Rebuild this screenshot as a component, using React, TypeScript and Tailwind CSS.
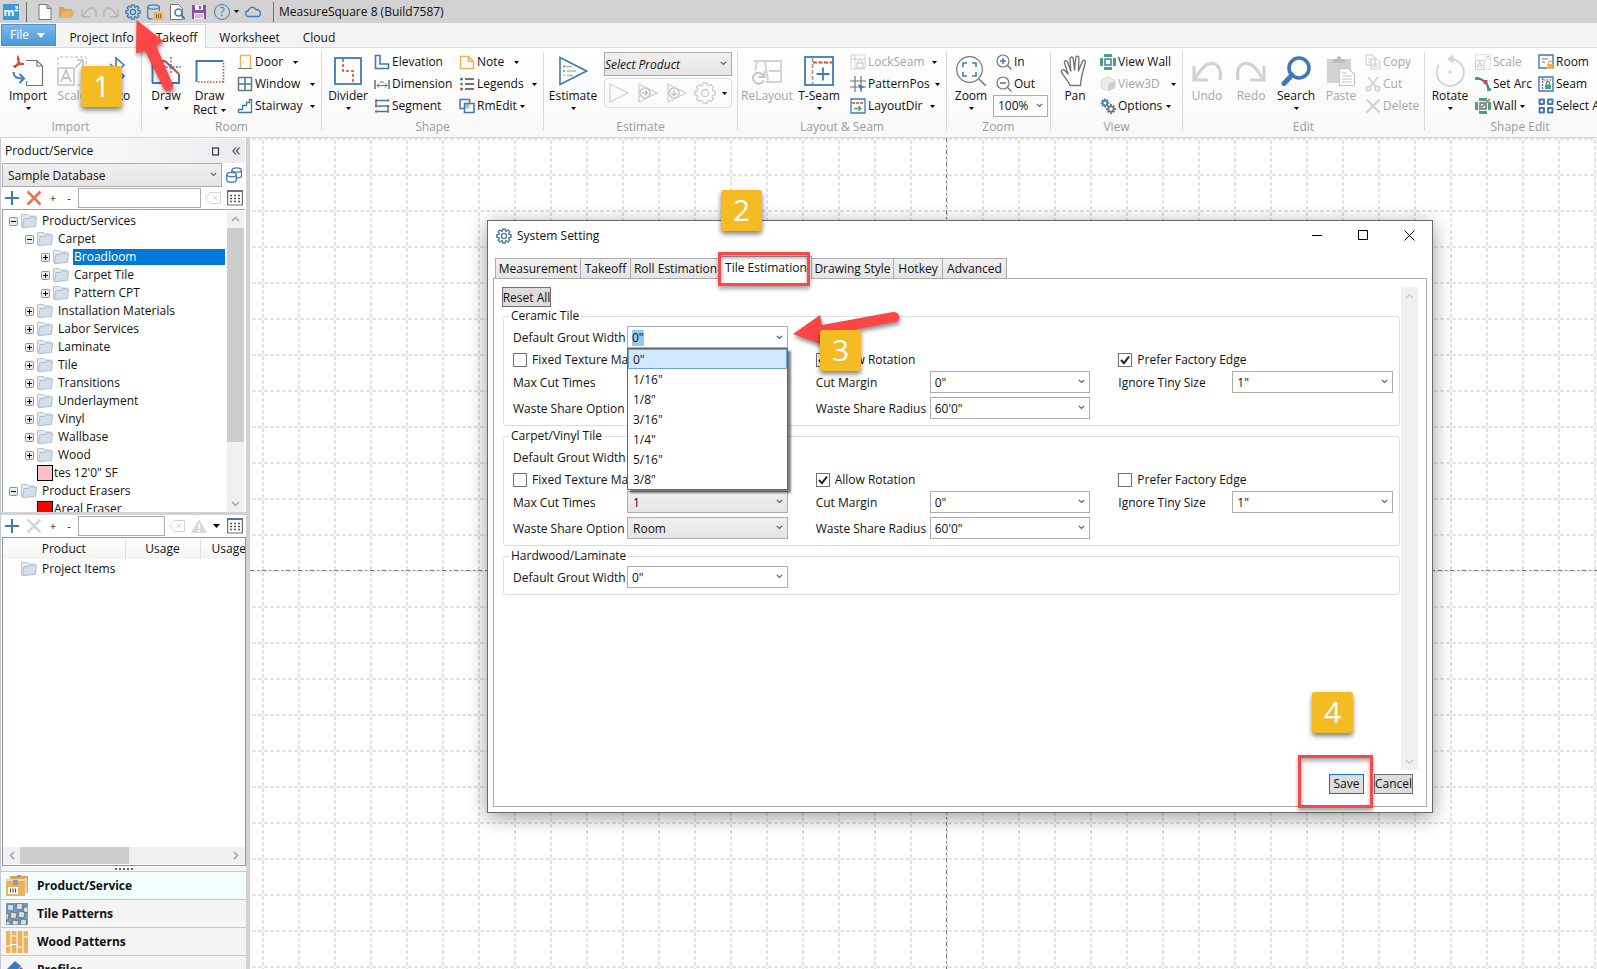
import React from "react";

type Kids = { children?: React.ReactNode };

const BLUE = "#3e7ab8";
const RED = "#cf4a33";
const ORANGE = "#e9b35f";
const GRAY = "#757575";
const GREEN = "#4ba37c";
const OFF = "#d2d2d2";

function Ico({ w = 16, h = 16, children }: Kids & { w?: number; h?: number }) {
  return (
    <svg width={w} height={h} viewBox={`0 0 ${w} ${h}`} fill="none" aria-hidden="true" className="shrink-0">
      {children}
    </svg>
  );
}

const gearPath = (cx: number, cy: number, r: number, depth: number) => {
  const pts: string[] = [];
  for (let i = 0; i < 8; i++) {
    const a = (i * Math.PI) / 4;
    const put = (ang: number, rad: number) => pts.push(`${(cx + Math.cos(ang) * rad).toFixed(2)} ${(cy + Math.sin(ang) * rad).toFixed(2)}`);
    put(a - 0.28, r - depth);
    put(a - 0.18, r);
    put(a + 0.18, r);
    put(a + 0.28, r - depth);
  }
  return `M${pts.join("L")}Z`;
};

function Gear({ size = 16, color = BLUE }: { size?: number; color?: string }) {
  const c = size / 2;
  return (
    <Ico w={size} h={size}>
      <path d={gearPath(c, c, c - 0.7, 2)} stroke={color} strokeWidth="1.3" strokeLinejoin="round" />
      <circle cx={c} cy={c} r={size * 0.16} stroke={color} strokeWidth="1.3" />
    </Ico>
  );
}

function Caret() {
  return (
    <svg width="5" height="3" viewBox="0 0 5 3" aria-hidden="true" className="shrink-0">
      <path d="M0 0h5L2.500 3z" fill="#000" />
    </svg>
  );
}

function Chevron() {
  return (
    <svg width="7" height="5" viewBox="0 0 7 5" fill="none" aria-hidden="true" className="shrink-0">
      <path d="M.8.8l2.700 2.700L6.200.8" stroke="#606060" strokeWidth="1.200" />
    </svg>
  );
}

/* ---------- ribbon ---------- */

function Group({ label, width, children, last }: Kids & { label: string; width: string; last?: boolean }) {
  return (
    <section aria-label={label} className={`flex shrink-0 flex-col pt-[3px] ${width}`}>
      <div className={`relative flex h-[79px] flex-col ${last ? "" : "border-r border-[#d9d9d9]"}`}>
        <div className="flex h-[66px] items-start">{children}</div>
        <div className="text-center leading-5 text-[#9b9b9b]">{label}</div>
      </div>
    </section>
  );
}

function Big({ icon, label, width, caret, dim, children }: Kids & { icon: React.ReactNode; label: string; width: string; caret?: boolean; dim?: boolean }) {
  return (
    <button type="button" className={`flex h-[66px] shrink-0 flex-col items-center whitespace-nowrap pt-1 leading-[14px] ${width} ${dim ? "text-[#a6a6a6]" : ""}`}>
      <span className="flex h-8 items-center">{icon}</span>
      <span className="mt-0.5">{label}</span>
      {children}
      {caret && (
        <span className="mt-1">
          <Caret />
        </span>
      )}
    </button>
  );
}

function Small({ icon, label, width = "", caret, dim }: { icon: React.ReactNode; label: string; width?: string; caret?: boolean; dim?: boolean }) {
  return (
    <button type="button" className={`flex h-[22px] items-center whitespace-nowrap ${width} ${dim ? "text-[#a6a6a6]" : ""}`}>
      <span className="mr-0.5 flex">{icon}</span>
      <span>{label}</span>
      {caret && (
        <span className="ml-auto">
          <Caret />
        </span>
      )}
    </button>
  );
}

const ScaleArt = ({ k = 1 }: { k?: number }) => (
  <svg width={30 * k} height={30 * k} viewBox="0 0 30 30" fill="none" aria-hidden="true">
    <path d="M1 9V1h28v28H19" stroke="#cfcfcf" strokeWidth="1.600" strokeDasharray="3 2" />
    <path d="M1 12h16v17H1zM18 12l8-8m-6 0h6v6" stroke="#c4c4c4" strokeWidth="1.600" />
    <path d="M4 26l5-12 5 12M6 22h6" stroke="#c4c4c4" strokeWidth="1.800" />
  </svg>
);

const UndoArt = ({ flip, s = 30, color = OFF, sw = 3.2 }: { flip?: boolean; s?: number; color?: string; sw?: number }) => (
  <svg width={s} height={s} viewBox="0 0 30 30" fill="none" aria-hidden="true">
    <g transform={flip ? "matrix(-1 0 0 1 30 0)" : undefined}>
      <path d="M2 10v14h14" stroke={color} strokeWidth={sw} />
      <path d="M3 23C9 13 14 6.500 21 7.500c6 1 8.500 7 7 16.500" stroke={color} strokeWidth={sw} />
    </g>
  </svg>
);

const DashRect = () => (
  <Ico w={30} h={30}>
    <path d="M1.500 26V5h27" stroke={BLUE} strokeWidth="2" />
    <path d="M28.500 7v19M3 26h26" stroke={RED} strokeWidth="1.600" strokeDasharray="1.500 1.500" />
  </Ico>
);

const LoopDisc = ({ down }: { down?: boolean }) => (
  <Ico w={22} h={22}>
    <path d="M2 2l18 9-18 9z" stroke="#d0d0d0" strokeWidth="1.200" />
    <circle cx="8" cy="11" r="5" stroke="#c8c8c8" strokeWidth="1.600" fill="#fafafa" />
    <path d={down ? "M8 8v5m-2.500-2l2.500 2.500 2.500-2.500" : "M5 11h5m-2-2.500l2.500 2.500-2.500 2.500"} stroke="#c0c0c0" strokeWidth="1.300" />
  </Ico>
);

const Mag = ({ sign }: { sign: string }) => (
  <Ico>
    <circle cx="7" cy="7" r="6" stroke={GRAY} strokeWidth="1.200" />
    <path d="M11.500 11.500l4 4" stroke={GRAY} strokeWidth="1.300" />
    <path d={sign} stroke={BLUE} strokeWidth="1.500" />
  </Ico>
);

const WallArt = ({ cut }: { cut?: boolean }) => (
  <Ico>
    <path d="M4 0h8v3H4zM4 13h8v3H4zM0 4h3v8H0zM13 4h3v8h-3z" fill={GREEN} />
    <rect x="5" y="5" width="6" height="6" stroke={BLUE} strokeWidth="1.500" />
    {cut && <path d="M4 12L15 1" stroke="#e07a52" strokeWidth="2" />}
  </Ico>
);

function Ribbon() {
  return (
    <div className="flex h-[90px] shrink-0 overflow-hidden border-b border-[#d5d5d5] bg-linear-to-b from-white to-[#f8f8f8]">
      <Group label="Import" width="w-[142px]">
        <Big width="ml-2 w-10" label="Import" caret icon={
          <Ico w={32} h={32}>
            <path d="M14 5.500h11l5.500 5.500v19.500h-16V26M25 5.500V11h5.500" stroke={GRAY} strokeWidth="1.200" />
            <path d="M1 11.500c5-1 7-5 5-9.500-1 4 2 8 6 7-4 0-8 1-9 4" stroke={RED} strokeWidth="1.700" />
            <path d="M1.500 17c0 5 3 6.500 9 6.500" stroke={BLUE} strokeWidth="2" />
            <path d="M7.500 19l4.500 4.500L7.500 28" stroke={BLUE} strokeWidth="2" />
          </Ico>
        } />
        <Big width="w-12" label="Scale" dim icon={<ScaleArt />} />
        <Big width="w-[42px]" label="Auto" icon={
          <Ico w={30} h={32}>
            <path d="M8 9l14 12-8 8V3l8 7L8 23" stroke={BLUE} strokeWidth="1.600" />
          </Ico>
        } />
      </Group>

      <Group label="Room" width="w-[180px]">
        <Big width="ml-1 w-10" label="Draw" caret icon={
          <Ico w={30} h={30}>
            <path d="M1.500 27V5H14M28 18v9H1" stroke={BLUE} strokeWidth="2" />
            <path d="M14 5l14 13" stroke={RED} strokeWidth="2" />
            <path d="M20 1v16M11 11h19" stroke={BLUE} strokeWidth="1.400" strokeDasharray="2 1.500" />
          </Ico>
        } />
        <button type="button" className="ml-1 flex h-[66px] w-[39px] shrink-0 flex-col items-center pt-1 leading-[14px]">
          <span className="flex h-8 items-center"><DashRect /></span>
          <span className="mt-0.5">Draw</span>
          <span className="flex items-center gap-1">Rect <Caret /></span>
        </button>
        <div className="ml-2 flex flex-col">
          <Small label="Door" width="w-[61px]" caret icon={
            <Ico>
              <path d="M3.500 14V1.500h10V14" stroke={ORANGE} strokeWidth="1.500" />
              <path d="M1 14.500h14" stroke={GRAY} />
              <circle cx="6" cy="8" r="0.800" fill={ORANGE} />
            </Ico>
          } />
          <Small label="Window" width="w-[78px]" caret icon={
            <Ico>
              <rect x="1.500" y="1.500" width="13" height="13" stroke={GRAY} strokeWidth="1.500" />
              <path d="M8 2v12M2 8h12" stroke={BLUE} strokeWidth="1.500" />
            </Ico>
          } />
          <Small label="Stairway" width="w-[78px]" caret icon={
            <Ico><path d="M1.500 14.500v-3h4v-4h4v-3h3v-3h2v13z" stroke={BLUE} strokeWidth="1.300" /></Ico>
          } />
        </div>
      </Group>

      <Group label="Shape" width="w-[222px]">
        <Big width="ml-1 w-11" label="Divider" caret icon={
          <Ico w={28} h={28}>
            <rect x="1" y="1" width="26" height="26" stroke={BLUE} strokeWidth="1.800" />
            <path d="M9 2v12h10v13" stroke={RED} strokeWidth="1.600" strokeDasharray="3 2" />
          </Ico>
        } />
        <div className="ml-1 flex w-[85px] flex-col">
          <Small label="Elevation" icon={<Ico><path d="M1.500 1.500h4.500v8.500h8.500v4.500h-13z" stroke={BLUE} strokeWidth="1.600" /></Ico>} />
          <Small label="Dimension" icon={
            <Ico>
              <path d="M1 4v9M15 4v9" stroke={GRAY} strokeWidth="1.600" />
              <path d="M3 9.500h10M5 7.500l-2 2 2 2M11 7.500l2 2-2 2" stroke={BLUE} />
              <path d="M6 6h4" stroke={GRAY} />
            </Ico>
          } />
          <Small label="Segment" icon={
            <Ico>
              <path d="M2 2.500h12M2 8h12M2 13.500h12M2 3v5M14 8v5" stroke={BLUE} strokeWidth="1.400" />
              <path d="M1 1.500h2v2H1zM13 1.500h2v2h-2zM1 7h2v2H1zM13 7h2v2h-2zM1 12.500h2v2H1zM13 12.500h2v2h-2z" fill={RED} />
            </Ico>
          } />
        </div>
        <div className="flex flex-col">
          <Small label="Note" width="w-[60px]" caret icon={<Ico><path d="M1.500 2.500h8l5 5v7h-13zM9.500 2.500v5h5" stroke={ORANGE} strokeWidth="1.500" /></Ico>} />
          <Small label="Legends" width="w-[78px]" caret icon={
            <Ico>
              <path d="M6 3h9M6 8h9M6 13h9" stroke={GRAY} strokeWidth="2" />
              <circle cx="2.500" cy="3" r="1.500" fill={BLUE} /><circle cx="2.500" cy="8" r="1.500" fill={GREEN} /><circle cx="2.500" cy="13" r="1.500" fill={RED} />
            </Ico>
          } />
          <Small label="RmEdit" width="w-[66px]" caret icon={
            <Ico>
              <path d="M5.500 5.500h5v5h-5z" fill="#bcbcbc" />
              <path d="M5 10.500H1v-9h9.500V5M5.500 5.500h9.500v9H5.500z" stroke={BLUE} strokeWidth="1.500" />
            </Ico>
          } />
        </div>
      </Group>

      <Group label="Estimate" width="w-[194px]">
        <Big width="ml-1 w-[50px]" label="Estimate" caret icon={
          <Ico w={30} h={30}>
            <path d="M2 1.500L28.500 15 2 28.500z" stroke={BLUE} strokeWidth="1.600" />
            <path d="M8 10.500h6M9 15h9M9 19.500h6" stroke="#b5b5b5" strokeWidth="1.600" />
            <circle cx="6" cy="10.500" r="1" fill={RED} /><circle cx="6" cy="15" r="1" fill={GREEN} /><circle cx="6" cy="19.500" r="1" fill={ORANGE} />
          </Ico>
        } />
        <div className="ml-1.5 mt-px flex w-32 flex-col gap-0.5">
          <div className="relative">
            <select aria-label="Select Product" className="block h-6 w-full appearance-none border border-[#acacac] bg-linear-to-b from-[#f0f0f0] to-[#e5e5e5] pt-0.5 text-left italic">
              <option>Select Product</option>
            </select>
            <span className="pointer-events-none absolute right-[5px] top-[9px]"><Chevron /></span>
          </div>
          <div className="flex h-[30px] items-center justify-between rounded-sm border border-[#dcdcdc] px-1">
            <button type="button" aria-label="Run"><Ico w={22} h={22}><path d="M1 2l18 9-18 9z" stroke="#d0d0d0" strokeWidth="1.200" /></Ico></button>
            <button type="button" aria-label="Run next"><LoopDisc /></button>
            <button type="button" aria-label="Run down"><LoopDisc down /></button>
            <button type="button" aria-label="Estimate settings"><Gear size={22} color="#cccccc" /></button>
            <Caret />
          </div>
        </div>
      </Group>

      <Group label="Layout & Seam" width="w-[209px]">
        <Big width="ml-1 w-[50px]" label="ReLayout" dim icon={
          <Ico w={32} h={30}>
            <path d="M3 5h28M6 5L4 15M14 5l3 21M18 15h13M15 26h16M30 5v21" stroke={OFF} strokeWidth="1.800" />
            <path d="M12.500 20a5.500 5.500 0 1 0 0 4.500" stroke="#c6c6c6" strokeWidth="2" />
            <path d="M13.500 15v6h-6" stroke="#c6c6c6" strokeWidth="1.800" />
          </Ico>
        } />
        <Big width="ml-1 w-[46px]" label="T-Seam" caret icon={
          <Ico w={30} h={30}>
            <rect x="1" y="1" width="28" height="28" stroke={BLUE} strokeWidth="1.800" />
            <path d="M8.500 2v26" stroke="#9a9a9a" strokeWidth="1.600" strokeDasharray="4 2" />
            <path d="M9 6.500h19" stroke={RED} strokeWidth="1.800" strokeDasharray="4 1.500" />
            <path d="M19 11.500v13M12.500 18h13" stroke={BLUE} strokeWidth="1.800" />
          </Ico>
        } />
        <div className="ml-2 flex flex-col">
          <Small label="LockSeam" width="w-[87px]" caret dim icon={
            <Ico>
              <path d="M1 1h14v14H1zM1 5h14M5 1v14" stroke={OFF} />
              <path d="M7 9h6v5H7zM8 9V7.500a2 2 0 0 1 4 0V9" stroke={OFF} strokeWidth="1.300" />
            </Ico>
          } />
          <Small label="PatternPos" width="w-[90px]" caret icon={
            <Ico>
              <path d="M5 0v16M11 0v16M0 5h16M0 11h16" stroke={GRAY} strokeWidth="1.200" />
              <path d="M8 8l7 3-3 1-1 3z" fill={BLUE} />
            </Ico>
          } />
          <Small label="LayoutDir" width="w-[85px]" caret icon={
            <Ico>
              <path d="M1 1h14v14H1z" stroke={BLUE} strokeWidth="1.300" />
              <path d="M2 5h12" stroke={RED} strokeWidth="1.500" strokeDasharray="3 1" />
              <path d="M4 10.500h7M8.500 8l2.500 2.500L8.500 13" stroke={GREEN} strokeWidth="1.300" />
            </Ico>
          } />
        </div>
      </Group>

      <Group label="Zoom" width="w-[104px]">
        <Big width="ml-1 w-10" label="Zoom" caret icon={
          <Ico w={30} h={30}>
            <circle cx="13.500" cy="13.500" r="12.800" stroke={GRAY} strokeWidth="1.200" />
            <path d="M23 23l7 7" stroke={GRAY} strokeWidth="1.500" />
            <path d="M7 11V7h4M16 7h4v4M20 16v4h-4M11 20H7v-4" stroke={BLUE} strokeWidth="1.600" />
          </Ico>
        } />
        <div className="ml-0.5 flex flex-col">
          <div className="ml-[3px]">
            <Small label="In" icon={<Mag sign="M7 4v6M4 7h6" />} />
            <Small label="Out" icon={<Mag sign="M4 7h6" />} />
          </div>
          <div className="relative">
            <select aria-label="Zoom level" className="block h-[22px] w-[55px] appearance-none border border-[#acacac] bg-white pl-1">
              <option>100%</option>
            </select>
            <span className="pointer-events-none absolute right-[5px] top-2"><Chevron /></span>
          </div>
        </div>
      </Group>

      <Group label="View" width="w-[132px]">
        <Big width="ml-1 w-10" label="Pan" icon={
          <Ico w={30} h={32}>
            <path d="M10 30.500C9 26 3 21 1.500 17c-.8-2.200 1.700-3.200 3.200-1.400L8 19 4.500 8c-.7-2.500 2.300-3.200 3.100-1l3.200 9L10 4c-.1-2.500 3-2.600 3.300-.2L14.500 15l1.200-12c.3-2.500 3.300-2.200 3.200.2L18.500 16l3.800-9.500c.9-2.200 3.600-1.200 3 1L22 20c-.8 4-1.500 7-1.500 10.500z" stroke={GRAY} strokeWidth="1.400" strokeLinejoin="round" />
          </Ico>
        } />
        <div className="ml-[5px] flex flex-col">
          <Small label="View Wall" icon={<WallArt />} />
          <Small label="View3D" width="w-[76px]" caret dim icon={
            <Ico>
              <path d="M8 1l7 3.500v7L8 15l-7-3.500v-7z" fill="#ececec" stroke="#d8d8d8" />
              <path d="M8 8l7-3.500v7L8 15z" fill="#cfcfcf" />
            </Ico>
          } />
          <Small label="Options" width="w-[71px]" caret icon={
            <Ico>
              <path d={gearPath(5, 5, 4.6, 1.5)} fill={BLUE} /><circle cx="5" cy="5" r="1.500" fill="#fff" />
              <path d={gearPath(11, 11, 5, 1.5)} fill={GRAY} /><circle cx="11" cy="11" r="1.800" fill="#fff" />
            </Ico>
          } />
        </div>
      </Group>

      <Group label="Edit" width="w-[242px]">
        <Big width="ml-1 w-10" label="Undo" dim icon={<UndoArt />} />
        <Big width="ml-1 w-10" label="Redo" dim icon={<UndoArt flip />} />
        <Big width="ml-1 w-[42px]" label="Search" caret icon={
          <Ico w={30} h={30}>
            <circle cx="18" cy="12" r="10" stroke={BLUE} strokeWidth="3.600" />
            <path d="M11 19l-8 8.500" stroke={BLUE} strokeWidth="5" strokeLinecap="round" />
          </Ico>
        } />
        <Big width="ml-1 w-10" label="Paste" dim icon={
          <Ico w={30} h={30}>
            <path d="M1 3h24v24H1z" fill="#d2d2d2" />
            <path d="M7 3h4c0-4 4-4 4 0h4v4H7z" fill="#bdbdbd" />
            <path d="M13.500 12.500h9l6 6v11h-15z" fill="#fff" stroke="#c4c4c4" strokeWidth="1.200" />
            <path d="M16 17h5M16 20h10M16 23h10M16 26h10" stroke="#c4c4c4" />
          </Ico>
        } />
        <div className="ml-1 flex flex-col">
          <Small label="Copy" dim icon={
            <Ico>
              <path d="M1 1h6l3 3v7H1zM6 5h5.500L15 8v7H6z" fill="#fff" stroke={OFF} strokeWidth="1.200" />
              <path d="M3 5h3M3 8h3M8 10h5M8 12.500h5" stroke={OFF} />
            </Ico>
          } />
          <Small label="Cut" dim icon={
            <Ico>
              <path d="M3 1l8 10M13 1L5 11" stroke={OFF} strokeWidth="2" />
              <circle cx="3.500" cy="12.500" r="2.200" stroke={OFF} strokeWidth="1.800" /><circle cx="12.500" cy="12.500" r="2.200" stroke={OFF} strokeWidth="1.800" />
            </Ico>
          } />
          <Small label="Delete" dim icon={<Ico><path d="M1.500 1.500l13 13M14.500 1.500l-13 13" stroke={OFF} strokeWidth="2.400" /></Ico>} />
        </div>
      </Group>

      <Group label="Shape Edit" width="w-[190px]" last>
        <Big width="ml-1 w-[42px]" label="Rotate" caret icon={
          <Ico w={32} h={32}>
            <path d="M5 10a13.500 13.500 0 1 0 11-6" stroke={OFF} strokeWidth="1.800" />
            <path d="M19 0l-5 4 5 4z" fill={OFF} stroke={OFF} />
            <circle cx="16" cy="17" r="1.600" fill={OFF} />
          </Ico>
        } />
        <div className="ml-1 flex w-[63px] flex-col">
          <Small label="Scale" dim icon={<ScaleArt k={16 / 30} />} />
          <Small label="Set Arc" icon={
            <Ico>
              <path d="M1 2c7 1 12 5 13 13" stroke={BLUE} strokeWidth="2.200" />
              <path d="M0 1h4v3H0zM12 12h4v3h-4z" fill={GREEN} /><path d="M8.500 4h4v4h-4z" fill={RED} />
            </Ico>
          } />
          <Small label="Wall" width="w-[50px]" caret icon={<WallArt cut />} />
        </div>
        <div className="flex flex-col">
          <Small label="Room" icon={
            <Ico>
              <path d="M1 1h14v13H1z" stroke={BLUE} strokeWidth="1.400" /><path d="M4 5h6M4 8h3" stroke={GRAY} />
              <path d="M9 10h6v5H9z" fill={ORANGE} /><path d="M10.500 10V8.500a1.500 1.500 0 0 1 3 0" stroke={ORANGE} strokeWidth="1.300" />
            </Ico>
          } />
          <Small label="Seam" icon={
            <Ico>
              <path d="M1 1h14v14H1z" stroke={BLUE} strokeWidth="1.400" /><path d="M4.500 2v12M5 4h9" stroke="#8a4fa0" strokeWidth="1.200" strokeDasharray="2 1" />
              <path d="M7 8.500h6V13H7z" fill={GREEN} /><path d="M8.500 8.500V7a1.500 1.500 0 0 1 3 0v1.500" stroke={GREEN} strokeWidth="1.300" />
            </Ico>
          } />
          <Small label="Select All" icon={<Ico><path d="M1.500 1.500H6V6H1.500zM10 1.500h4.500V6H10zM1.500 10H6v4.500H1.500zM10 10h4.500v4.500H10z" stroke={BLUE} strokeWidth="1.900" strokeLinejoin="round" /></Ico>} />
        </div>
      </Group>
    </div>
  );
}

/* ---------- title bar and tabs ---------- */

function TitleBar() {
  return (
    <header className="flex h-[23px] shrink-0 items-center bg-[#d2d2d2]">
      <span className="ml-[3px] flex h-4 w-4 items-center justify-center bg-[#3d9ad6] text-[11px] font-bold leading-4 text-white">m²</span>
      <span className="ml-[7px] h-5 w-px bg-[#6e6e6e]" />
      <div className="ml-2.5 flex items-center gap-1.5">
        <button type="button" aria-label="New"><Ico><path d="M2 .5h8l4 4v11H2zM10 .5v4h4" fill="#fff" stroke="#777" /></Ico></button>
        <button type="button" aria-label="Open"><Ico><path d="M0 3h5l1 2h7v2H4l-3 7H0z" fill="#dfa04a" /><path d="M4 7h12l-3 7H1z" fill={ORANGE} /></Ico></button>
        <button type="button" aria-label="Undo"><UndoArt s={16} color="#b4b4b4" sw={2.6} /></button>
        <button type="button" aria-label="Redo"><UndoArt s={16} flip color="#b4b4b4" sw={2.6} /></button>
        <button type="button" aria-label="Settings"><Gear /></button>
        <button type="button" aria-label="Database">
          <Ico>
            <ellipse cx="6.500" cy="3" rx="5.800" ry="2.200" stroke={BLUE} strokeWidth="1.200" />
            <path d="M.7 3v10c0 1 2 2 5 2M12.300 3v4" stroke={BLUE} strokeWidth="1.200" />
            <path d="M7 8h9v8H7z" fill={ORANGE} /><path d="M9.500 10v4M11.500 10v4M13.500 10v4" stroke="#8a6a35" />
          </Ico>
        </button>
        <button type="button" aria-label="Preview">
          <Ico>
            <path d="M1.500 .5h8l4 4v11h-12z" fill="#fff" stroke="#777" />
            <circle cx="9.500" cy="8.500" r="3.500" stroke={BLUE} strokeWidth="1.600" fill="#fff" /><path d="M12 11l4 4" stroke={BLUE} strokeWidth="2" />
          </Ico>
        </button>
        <button type="button" aria-label="Save project">
          <Ico><path d="M1 1h14v14H1z" fill="#8a4fa0" /><path d="M4 1h8v5H4zM3 9h10v6H3z" fill="#f4eef6" /><path d="M8 2h2v3H8z" fill="#8a4fa0" /><path d="M4 11h8M4 13h8" stroke="#a98bb5" /></Ico>
        </button>
        <button type="button" aria-label="Help" className="ml-px flex items-center gap-1">
          <span className="flex h-4 w-4 items-center justify-center rounded-full border border-[#3e7ab8] text-[12px] leading-4 text-[#3e7ab8]">?</span>
          <Caret />
        </button>
        <button type="button" aria-label="Cloud sync"><Ico><path d="M4 12.500a3 3 0 0 1-.5-6C4 3 9 2 11 5.500c3 0 4.500 2 4.500 3.700 0 2-1.500 3.300-3 3.300z" stroke={BLUE} strokeWidth="1.300" /></Ico></button>
      </div>
      <span className="ml-3 h-5 w-px bg-[#6e6e6e]" />
      <h1 className="ml-[5px]">MeasureSquare 8 (Build7587)</h1>
    </header>
  );
}

function TabStrip() {
  return (
    <nav className="flex h-[25px] shrink-0 items-end border-b border-[#dadada] bg-[#f4f4f4]">
      <button type="button" className="mb-px ml-px flex h-[22px] w-[55px] items-center gap-2 border border-[#4a93d2] bg-linear-to-b from-[#7db8e6] to-[#4a99da] pl-2 text-white">
        File
        <svg width="8" height="5" viewBox="0 0 8 5" aria-hidden="true"><path d="M0 0h8L4 5z" fill="#fff" /></svg>
      </button>
      <button type="button" className="h-[22px] w-[91px] pt-[3px]">Project Info</button>
      <button type="button" className="-mb-px h-6 w-[59px] border border-b-0 border-[#dadada] bg-white pt-[3px]">Takeoff</button>
      <button type="button" className="h-[22px] w-[87px] pt-[3px]">Worksheet</button>
      <button type="button" className="h-[22px] w-[52px] pt-[3px]">Cloud</button>
    </nav>
  );
}

/* ---------- left panel ---------- */

function Folder() {
  return (
    <Ico>
      <path d="M.5 1.500h6l1 1.500h6v9l-13 1.500z" fill="#e4eaf0" stroke="#b4bfc9" strokeWidth="0.900" />
      <path d="M3 5.500h5l1-1.500h6.500l-1 9.500L1.500 14.500z" fill="#d3e0ec" stroke="#a9b8c6" strokeWidth="0.900" />
    </Ico>
  );
}

function Expander({ open }: { open?: boolean }) {
  return (
    <Ico w={9} h={9}>
      <rect x=".5" y=".5" width="8" height="8" rx="1" fill="#e9ecef" stroke="#7f97ad" />
      <path d={open ? "M2 4.500h5" : "M2 4.500h5M4.500 2v5"} stroke="#000" />
    </Ico>
  );
}

const indents = ["pl-1.5", "pl-[22px]", "pl-[38px]"];

type Node = { label: string; level: number; open?: boolean; selected?: boolean };
const tree: Node[] = [
  { label: "Product/Services", level: 0, open: true },
  { label: "Carpet", level: 1, open: true },
  { label: "Broadloom", level: 2, selected: true },
  { label: "Carpet Tile", level: 2 },
  { label: "Pattern CPT", level: 2 },
  { label: "Installation Materials", level: 1 },
  { label: "Labor Services", level: 1 },
  { label: "Laminate", level: 1 },
  { label: "Tile", level: 1 },
  { label: "Transitions", level: 1 },
  { label: "Underlayment", level: 1 },
  { label: "Vinyl", level: 1 },
  { label: "Wallbase", level: 1 },
  { label: "Wood", level: 1 },
];

function TreeRow({ label, level, open, selected }: Node) {
  return (
    <li className={`flex h-[18px] items-center ${indents[level]}`}>
      <Expander open={open} />
      <span className="ml-[3px] flex"><Folder /></span>
      <span className={selected ? "ml-1 flex-1 bg-[#0078d7] pl-px leading-4 text-white" : "ml-[5px]"}>{label}</span>
    </li>
  );
}

function SwatchRow({ label, color }: { label: string; color: string }) {
  return (
    <li className="flex h-[18px] items-center gap-px pl-[34px]">
      <span className={`h-4 w-4 border border-black ${color}`} />
      <span>{label}</span>
    </li>
  );
}

const Plus = () => <Ico><path d="M8 1v14M1 8h14" stroke={BLUE} strokeWidth="2" /></Ico>;
const Cross = ({ color }: { color: string }) => <Ico><path d="M1.500 1.500l13 13M14.500 1.500l-13 13" stroke={color} strokeWidth="2.600" /></Ico>;
const ClearIcon = () => <Ico><path d="M5 2.500h10.500v11H5L.7 8zM7.500 5.500l5 5M12.500 5.500l-5 5" stroke="#d4d4d4" /></Ico>;
const TableIcon = ({ head = "#6f6f6f" }: { head?: string }) => (
  <Ico>
    <path d="M.6 1h14.800v14H.6z" stroke="#6f6f6f" strokeWidth="1.200" fill="#fff" />
    <path d="M0 0h16v2H0z" fill={head} />
    <path d="M3 5.500h10M3 8.500h10M3 11.500h10" stroke="#555" strokeWidth="1.500" strokeDasharray="2 2" />
  </Ico>
);

function ArrowGlyph({ d }: { d: string }) {
  return (
    <svg width="17" height="17" viewBox="0 0 17 17" fill="none" aria-hidden="true" className="shrink-0">
      <path d={d} stroke="#a3a3a3" strokeWidth="1.500" />
    </svg>
  );
}

function SideNav({ icon, label, active }: { icon: React.ReactNode; label: string; active?: boolean }) {
  return (
    <button type="button" className={`flex h-7 shrink-0 items-center gap-[9px] border-b border-[#c4c8d0] pl-[5px] text-left font-bold ${active ? "bg-[#f0ffff]" : "bg-[#f4f4f4]"}`}>
      {icon}
      {label}
    </button>
  );
}

function LeftPanel() {
  return (
    <aside className="flex w-[250px] shrink-0 flex-col overflow-hidden border-l border-r-4 border-l-[#c4c8d0] border-r-[#d2d2d6] bg-white">
      <div className="mr-px mt-px flex h-6 shrink-0 items-center bg-linear-to-r from-white to-[#ececf0] pl-1">
        <h2 className="flex-1">Product/Service</h2>
        <button type="button" aria-label="Float panel" className="mr-3"><Ico w={8} h={9}><rect x=".5" y="1" width="6" height="7" stroke="#333" strokeWidth="1.200" /></Ico></button>
        <button type="button" aria-label="Collapse panel" className="mr-[5px]"><Ico w={8} h={8}><path d="M4 .5L1 4l3 3.500M7.500.5l-3 3.500 3 3.500" stroke="#333" strokeWidth="1.100" /></Ico></button>
      </div>
      <div className="flex h-6 shrink-0 items-center gap-1 pl-px">
        <div className="relative">
          <select aria-label="Database" className="block h-6 w-[220px] appearance-none border border-[#acacac] bg-linear-to-b from-[#f0f0f0] to-[#e5e5e5] pl-[5px] pt-0.5">
            <option>Sample Database</option>
          </select>
          <span className="pointer-events-none absolute right-[5px] top-[9px]"><Chevron /></span>
        </div>
        <button type="button" aria-label="Databases">
          <Ico>
            <path d="M6 3v6c0 2.500 9.500 2.500 9.500 0V3" fill="#fff" stroke={BLUE} strokeWidth="1.300" />
            <ellipse cx="10.700" cy="3" rx="4.700" ry="2.200" fill="#fff" stroke={BLUE} strokeWidth="1.300" />
            <path d="M.8 7.500v5.500c0 3 9.500 3 9.500 0V7.500" fill="#fff" stroke={BLUE} strokeWidth="1.300" />
            <ellipse cx="5.500" cy="7.500" rx="4.700" ry="2.200" fill="#fff" stroke={BLUE} strokeWidth="1.300" />
          </Ico>
        </button>
      </div>
      <div className="flex h-[22px] shrink-0 items-center pl-[3px] pr-[3px]">
        <button type="button" aria-label="Add product"><Plus /></button>
        <button type="button" aria-label="Remove product" className="ml-1.5"><Cross color="#e8764a" /></button>
        <button type="button" className="ml-[3px] w-4 text-center text-[11px]">+</button>
        <button type="button" className="w-4 text-center text-[11px]">-</button>
        <input aria-label="Search products" className="ml-px h-5 w-[123px] border border-[#acacac]" />
        <button type="button" aria-label="Clear search" className="ml-1"><ClearIcon /></button>
        <button type="button" aria-label="Columns" className="ml-auto"><TableIcon /></button>
      </div>
      <div className="ml-px mr-px flex h-[303px] shrink-0 overflow-hidden border-l border-t border-[#9aa0a8]">
        <ul className="mr-0.5 flex-1 pt-0.5">
          {tree.map((n) => <TreeRow key={n.label} {...n} />)}
          <SwatchRow label={`tes 12'0" SF`} color="bg-[#ffc0cb]" />
          <TreeRow label="Product Erasers" level={0} open />
          <SwatchRow label="Areal Eraser" color="bg-[#ff0000]" />
        </ul>
        <div className="mr-px mt-px flex w-[17px] flex-col bg-[#f0f0f0]">
          <ArrowGlyph d="M5 10l3.500-3.500L12 10" />
          <div className="h-[214px] bg-[#cdcdcd]" />
          <span className="mt-auto"><ArrowGlyph d="M5 7l3.500 3.500L12 7" /></span>
        </div>
      </div>
      <div className="h-[3px] shrink-0 bg-[#d2d2d6]" />
      <div className="flex h-[22px] shrink-0 items-center pl-[3px] pr-[3px]">
        <button type="button" aria-label="Add item"><Plus /></button>
        <button type="button" aria-label="Remove item" className="ml-1.5"><Cross color="#d8d8d8" /></button>
        <button type="button" className="ml-[3px] w-4 text-center text-[11px]">+</button>
        <button type="button" className="w-4 text-center text-[11px]">-</button>
        <input aria-label="Search items" className="ml-px h-5 w-[87px] border border-[#acacac]" />
        <button type="button" aria-label="Clear item search" className="ml-1"><ClearIcon /></button>
        <button type="button" aria-label="Warnings" className="ml-1.5"><Ico><path d="M8 1l8 14H0z" fill="#d9d9d9" /><path d="M8 6v5M8 12v2" stroke="#fff" strokeWidth="1.600" /></Ico></button>
        <svg width="7" height="4" viewBox="0 0 7 4" aria-hidden="true" className="ml-1.5"><path d="M0 0h7L3.500 4z" /></svg>
        <button type="button" aria-label="Item columns" className="ml-auto"><TableIcon head={BLUE} /></button>
      </div>
      <div className="ml-px flex min-h-0 flex-1 flex-col overflow-hidden border border-[#8f959e] py-px">
        <table className="w-[290px] table-fixed">
          <thead>
            <tr className="h-[20px] bg-linear-to-b from-white to-[#f4f4f4]">
              <th scope="col" className="w-[122px] border-r border-[#e0e0e0] font-normal">Product</th>
              <th scope="col" className="w-[75px] border-r border-[#e0e0e0] font-normal">Usage</th>
              <th scope="col" className="pl-[11px] text-left font-normal">Usage</th>
            </tr>
          </thead>
          <tbody>
            <tr>
              <td colSpan={3} className="h-5 pl-[18px]">
                <span className="flex items-center gap-[5px]"><Folder />Project Items</span>
              </td>
            </tr>
          </tbody>
        </table>
        <div className="mt-auto flex h-[17px] shrink-0 bg-[#f0f0f0]">
          <ArrowGlyph d="M11 5L7.500 8.500 11 12" />
          <div className="w-[109px] bg-[#cdcdcd]" />
          <span className="ml-auto"><ArrowGlyph d="M6 5l3.500 3.500L6 12" /></span>
        </div>
      </div>
      <div className="mt-px flex h-[5px] shrink-0 items-center justify-center gap-0.5 border-b border-[#c4c8d0] bg-[#f4f4f4]">
        <i className="h-0.5 w-0.5 bg-[#666]" /><i className="h-0.5 w-0.5 bg-[#666]" /><i className="h-0.5 w-0.5 bg-[#666]" /><i className="h-0.5 w-0.5 bg-[#666]" /><i className="h-0.5 w-0.5 bg-[#666]" />
      </div>
      <div className="flex h-[97px] shrink-0 flex-col overflow-hidden">
        <SideNav active label="Product/Service" icon={
          <Ico w={22} h={22}>
            <path d="M4 1h18v17H4z" fill="#dda552" /><path d="M0 4h19v17H0z" fill={ORANGE} /><path d="M0 5h19M20 3v16" stroke="#fff" />
            <path d="M7 5h5v5H7zM9 2l3-2h4l-2 2z" fill="#9a9a9a" /><path d="M2 12h10v7H2z" fill="#fff" /><path d="M4.500 13.500v4M7 13.500v4M9.500 13.500v4" stroke="#555" strokeWidth="1.200" />
          </Ico>
        } />
        <SideNav label="Tile Patterns" icon={
          <Ico w={22} h={22}>
            <path d="M0 0h22v22H0z" fill="#56a5dd" />
            <path d="M2 1l6 1-1 6-6-1zM11 0l6 1-1 6-6-1zM18 4h4v6l-5-1zM5 9l6 1-1 6-6-1zM13 8l6 1-1 6-6-1zM0 10l3 1-1 6-2-1zM7 17l6 1-1 4H6zM15 16l6 1-1 5h-6zM0 18l4 1v3H0z" fill="#dcdcdc" stroke="#777" />
          </Ico>
        } />
        <SideNav label="Wood Patterns" icon={
          <Ico w={22} h={22}>
            <path d="M0 0h22v22H0z" fill={ORANGE} />
            <path d="M5 0v22M11 0v22M17 0v22M0 15h5M5 5h6M5 13.500h6M11 16h6M17 6h5" stroke="#fff" />
          </Ico>
        } />
        <SideNav label="Profiles" icon={
          <Ico w={22} h={22}>
            <path d="M0 11L9 2l6 5-9 10z" fill={BLUE} /><path d="M10 13l5-5 7 7-5 5z" fill="#8a4fa0" />
          </Ico>
        } />
      </div>
    </aside>
  );
}

/* ---------- drawing canvas ---------- */

function GridCanvas() {
  return (
    <svg className="h-full w-full" aria-hidden="true">
      <defs>
        <pattern id="cells" x="12" y="0" width="36" height="36" patternUnits="userSpaceOnUse">
          <path d="M2 1h4M8 1h4M14 1h4M20 1h4M26 1h4M32 1h4M1 2v4M1 8v4M1 14v4M1 20v4M1 26v4M1 32v4" stroke="#e3e3e3" strokeWidth="2" />
        </pattern>
      </defs>
      <rect width="100%" height="100%" fill="url(#cells)" />
      <path d="M696.500 0V840M0 432.500H1400" stroke="#7a7a7a" strokeDasharray="4 3 2 3" />
    </svg>
  );
}

/* ---------- dialog ---------- */

function Combo({ label, options, gray }: { label: string; options: string[]; gray?: boolean }) {
  return (
    <label className="relative flex h-[22px] items-center">
      <span className="w-[114px] shrink-0 whitespace-nowrap pt-0.5">{label}</span>
      <select className={`h-[22px] min-w-0 flex-1 appearance-none border border-[#acacac] pt-px ${gray ? "bg-linear-to-b from-[#f0f0f0] to-[#e5e5e5] pl-[5px]" : "bg-white pl-1"}`}>
        {options.map((o) => <option key={o}>{o}</option>)}
      </select>
      <span className="pointer-events-none absolute right-[5px] top-2"><Chevron /></span>
    </label>
  );
}

const widths = ['0"', '1/16"', '1/8"', '3/16"', '1/4"', '5/16"', '3/8"'];

function OpenCombo() {
  return (
    <div className="relative flex h-[22px] items-center">
      <label htmlFor="grout" className="w-[114px] shrink-0 whitespace-nowrap pt-0.5">Default Grout Width</label>
      <div className="relative flex-1">
        <button id="grout" type="button" role="combobox" aria-expanded="true" aria-controls="grout-list" className="flex h-[22px] w-full items-center justify-between border border-[#acacac] bg-white pl-1 pr-1">
          <span className="mt-px bg-[#99c9ef] leading-4">0"</span>
          <Chevron />
        </button>
        <ul id="grout-list" role="listbox" className="absolute left-0 top-[22px] z-20 w-full border border-[#646464] bg-white shadow-[3px_3px_2px_rgba(0,0,0,0.5)]">
          {widths.map((w, i) => (
            <li key={w} role="option" aria-selected={i === 0} className={`flex h-5 items-center border pl-1 pt-0.5 ${i === 0 ? "border-[#66a7e8] bg-[#d1e8ff]" : "border-transparent"}`}>{w}</li>
          ))}
        </ul>
      </div>
    </div>
  );
}

function Check({ label, on }: { label: string; on?: boolean }) {
  return (
    <label className="relative flex items-center gap-[5px] whitespace-nowrap">
      <input type="checkbox" defaultChecked={on} className="peer h-3.5 w-3.5 appearance-none border border-[#707070] bg-white" />
      <svg width="14" height="14" viewBox="0 0 14 14" fill="none" aria-hidden="true" className="pointer-events-none absolute left-0 hidden peer-checked:block">
        <path d="M3 7l3 3.200L11 3.500" stroke="#212121" strokeWidth="2" />
      </svg>
      <span>{label}</span>
    </label>
  );
}

function FieldGroup({ title, children }: Kids & { title: string }) {
  return (
    <fieldset className="ml-px mr-px mt-0.5 min-w-0 rounded-[3px] border border-[#d5dfe5] pb-[6px] pl-[9px] pr-[6px] pt-0.5">
      <legend className="-ml-1 px-0.5 leading-4">{title}</legend>
      {children}
    </fieldset>
  );
}

const cols = "grid grid-cols-3 gap-x-7";

function TileRows({ edge }: { edge?: boolean }) {
  return (
    <>
      <div className={`${cols} h-[23px] items-center`}>
        <Check label="Fixed Texture Matching" />
        <Check label="Allow Rotation" on />
        <Check label="Prefer Factory Edge" on={edge} />
      </div>
      <div className={cols}>
        <Combo label="Max Cut Times" options={["1", "2", "3"]} gray />
        <Combo label="Cut Margin" options={['0"']} />
        <Combo label="Ignore Tiny Size" options={['1"']} />
      </div>
      <div className={`${cols} mt-1`}>
        <Combo label="Waste Share Option" options={["Room", "Project"]} gray />
        <Combo label="Waste Share Radius" options={[`60'0"`]} />
      </div>
    </>
  );
}

const tabs = [
  { label: "Measurement", width: "w-[86px]" },
  { label: "Takeoff", width: "w-[51px]" },
  { label: "Roll Estimation", width: "w-[91px]" },
  { label: "Tile Estimation", width: "w-[92px]", active: true },
  { label: "Drawing Style", width: "w-[83px]" },
  { label: "Hotkey", width: "w-[50px]" },
  { label: "Advanced", width: "w-[65px]" },
];

function SettingsDialog() {
  return (
    <div role="dialog" aria-label="System Setting" className="absolute left-[487px] top-[220px] flex h-[593px] w-[946px] flex-col border border-[#6a6a6a] bg-white shadow-[0_4px_18px_rgba(0,0,0,0.4)]">
      <div className="flex h-[30px] shrink-0 items-center pl-2">
        <Gear color="#4a7599" />
        <h2 className="ml-[5px] flex-1">System Setting</h2>
        <div className="flex pb-0.5">
          <button type="button" aria-label="Minimize" className="flex w-[46px] justify-center"><Ico w={10} h={10}><path d="M0 5.500h10" stroke="#000" /></Ico></button>
          <button type="button" aria-label="Maximize" className="flex w-[46px] justify-center"><Ico w={10} h={10}><path d="M.5.5h9v9h-9z" stroke="#000" /></Ico></button>
          <button type="button" aria-label="Close" className="flex w-[46px] justify-center"><Ico w={11} h={11}><path d="M.5.5l10 10M10.500.5l-10 10" stroke="#000" /></Ico></button>
        </div>
      </div>
      <div role="tablist" className="flex h-[27px] shrink-0 items-end pl-[7px]">
        {tabs.map((t) => (
          <button key={t.label} type="button" role="tab" aria-selected={!!t.active} className={`-mr-px shrink-0 whitespace-nowrap border border-b-0 border-[#acacac] ${t.width} ${t.active ? "relative z-10 -mb-px h-[23px] bg-white pb-px" : "h-5 bg-linear-to-b from-[#f0f0f0] to-[#e5e5e5] pt-px"}`}>
            {t.label}
          </button>
        ))}
      </div>
      <div className="mx-[5px] mb-[5px] flex min-h-0 flex-1 flex-col border border-[#acacac] pb-3 pl-2 pr-2 pt-2">
        <div className="flex min-h-0 flex-1">
          <div className="min-w-0 flex-1">
            <button type="button" className="-mb-px block h-5 w-[49px] whitespace-nowrap border border-[#707070] bg-[#dddddd] pt-px">
              <span className="flex justify-center">Reset All</span>
            </button>
            <FieldGroup title="Ceramic Tile">
              <div className={cols}><OpenCombo /></div>
              <TileRows edge />
            </FieldGroup>
            <FieldGroup title="Carpet/Vinyl Tile">
              <div className={cols}><Combo label="Default Grout Width" options={widths} /></div>
              <TileRows />
            </FieldGroup>
            <FieldGroup title="Hardwood/Laminate">
              <div className={cols}><Combo label="Default Grout Width" options={widths} /></div>
            </FieldGroup>
          </div>
          <div className="flex w-[17px] flex-col justify-between bg-[#f0f0f0]">
            <span className="opacity-50"><ArrowGlyph d="M5 11l3.500-3.500L12 11" /></span>
            <span className="opacity-50"><ArrowGlyph d="M5 7l3.500 3.500L12 7" /></span>
          </div>
        </div>
        <div className="mt-1 flex shrink-0 justify-end gap-2.5 pr-[5px]">
          <button type="button" className="h-5 w-[35px] border border-[#0078d7] bg-[#dddddd]">Save</button>
          <button type="button" className="flex h-5 w-[39px] items-center justify-center border border-[#707070] bg-[#dddddd]">Cancel</button>
        </div>
      </div>
    </div>
  );
}

/* ---------- step markers ---------- */

function Badge({ n, place }: { n: number; place: string }) {
  return (
    <div className={`pointer-events-none absolute flex h-[41px] w-[41px] items-center justify-center rounded-[3px] bg-[#f4bc22] pb-0.5 text-[30px] leading-none text-white shadow-[0_3px_5px_rgba(0,0,0,0.5)] ${place}`}>{n}</div>
  );
}

export default function App() {
  return (
    <div className="relative flex h-screen flex-col overflow-hidden bg-white font-['Open_Sans','Noto_Sans',sans-serif] text-[12px] leading-4 text-[#111]">
      <TitleBar />
      <TabStrip />
      <Ribbon />
      <div className="flex min-h-0 flex-1">
        <LeftPanel />
        <main aria-label="Drawing canvas" className="min-w-0 flex-1"><GridCanvas /></main>
      </div>
      <SettingsDialog />

      <svg width="60" height="90" viewBox="0 0 60 90" aria-hidden="true" className="pointer-events-none absolute left-[126px] top-[12px] drop-shadow-[1px_3px_2px_rgba(0,0,0,0.45)]">
        <path d="M10.500 8L38 29.500 30 33.500 47 73c1 5-6 8-9 4L19 38.500 10 41.500z" fill="#fd4645" />
      </svg>
      <Badge n={1} place="left-[81px] top-[66px]" />
      <div className="pointer-events-none absolute left-[718px] top-[252px] z-20 h-[34px] w-[92px] border-[3px] border-[#fd4645] shadow-[0_3px_4px_rgba(0,0,0,0.35),inset_0_3px_4px_rgba(0,0,0,0.35)]" />
      <Badge n={2} place="left-[721px] top-[190px]" />
      <svg width="120" height="50" viewBox="0 0 120 50" aria-hidden="true" className="pointer-events-none absolute left-[788px] top-[304px] drop-shadow-[1px_3px_2px_rgba(0,0,0,0.45)]">
        <path d="M5 30L32 11l2 10 71-13c8 0 8 9 2 10L36 31l2 11z" fill="#fd4645" />
      </svg>
      <Badge n={3} place="left-[820px] top-[330px]" />
      <div className="pointer-events-none absolute left-[1298px] top-[755px] h-[53px] w-[75px] border-[3px] border-[#fd4645] shadow-[0_3px_4px_rgba(0,0,0,0.35),inset_0_3px_4px_rgba(0,0,0,0.35)]" />
      <Badge n={4} place="left-[1312px] top-[692px]" />
    </div>
  );
}
